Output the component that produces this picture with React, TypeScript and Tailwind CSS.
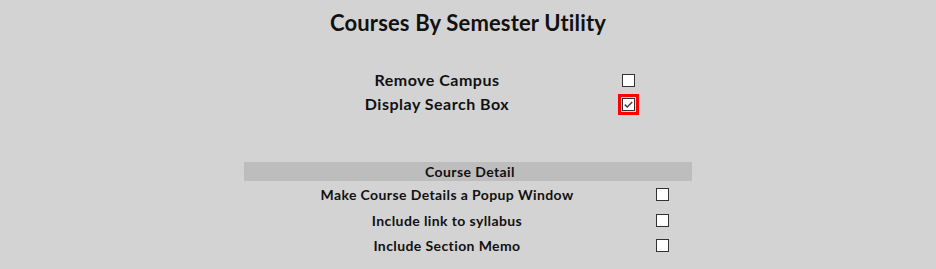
import React from "react";

const font = { fontFamily: "Lato, 'Noto Sans', sans-serif" };

function Box({ checked = false, focus = false }: { checked?: boolean; focus?: boolean }) {
  return (
    <span className={`inline-flex p-[1px] ${focus ? "outline-[3px] outline-solid outline-[#ff0000] outline-offset-0" : ""}`}>
      <span className="w-[13px] h-[13px] bg-white border border-[#333] flex items-center justify-center">
        {checked && (
          <svg width="11" height="11" viewBox="0 0 11 11">
            <path d="M1.8 5.6 L4.3 8 L9.2 3" fill="none" stroke="#444" strokeWidth="1.5" />
          </svg>
        )}
      </span>
    </span>
  );
}

export default function App() {
  return (
    <div className="w-[936px] h-[269px] bg-[#d3d3d3] text-[#111] overflow-hidden" style={font}>
      <h1 className="text-center font-bold text-[22px] tracking-[0.15px] pt-[8px] h-[40px] leading-[30px]">Courses By Semester Utility</h1>
      <div className="w-[448px] mx-auto">
        <div className="pt-[28px] pl-[40px]">
          {[
            { label: "Remove Campus" },
            { label: "Display Search Box", checked: true, focus: true },
          ].map((r) => (
            <div key={r.label} className="flex items-center h-[24px]">
              <div className="w-[306px] text-center font-bold text-[16px] tracking-[0.5px] leading-[20px]">{r.label}</div>
              <div className="w-[76px] flex justify-center">
                <Box checked={r.checked} focus={r.focus} />
              </div>
            </div>
          ))}
        </div>
        <div className="mt-[46px]">
          <div className="bg-[#bdbdbd] h-[19px] text-center font-bold text-[14px] tracking-[0.4px] leading-[19px] pl-[4px]">Course Detail</div>
          <div className="pt-[1px]">
            {["Make Course Details a Popup Window", "Include link to syllabus", "Include Section Memo"].map((l) => (
              <div key={l} className="flex items-center h-[25.5px]">
                <div className="w-[406px] text-center font-bold text-[14px] tracking-[0.4px]">{l}</div>
                <div className="w-[24px] flex justify-center">
                  <Box />
                </div>
              </div>
            ))}
          </div>
        </div>
      </div>
    </div>
  );
}
